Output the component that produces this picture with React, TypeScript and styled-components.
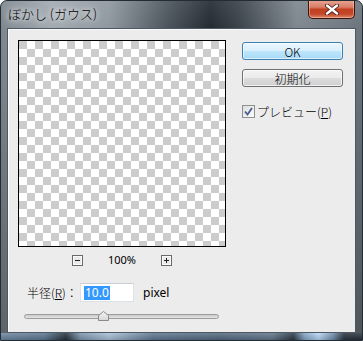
import React from "react";
import styled, { createGlobalStyle } from "styled-components";

const Global = createGlobalStyle`
  html, body { margin: 0; padding: 0; background: #fff; }
  body {
    width: 363px; height: 341px; overflow: hidden;
    font-family: "Noto Sans CJK JP", "Noto Sans", sans-serif;
    font-weight: 300;
  }
`;

const Window = styled.div`
  width: 363px;
  height: 341px;
  box-sizing: border-box;
  display: flex;
  flex-direction: column;
  border: 1px solid #232b33;
  border-radius: 7px 7px 0 0;
  overflow: hidden;
  background:
    linear-gradient(to bottom, rgba(255,255,255,0.08) 0, rgba(0,0,0,0) 28px, rgba(0,0,0,0.28) 100%),
    linear-gradient(90deg, #7e878f 0%, #a3abb2 14%, #8f989f 30%, #4c555d 46%, #252b32 58%, #3b434b 66%, #7f888f 82%, #6c757d 100%);
`;

const TitleBar = styled.div`
  flex: none;
  height: 27px;
  display: flex;
  align-items: flex-start;
  justify-content: space-between;
  padding: 0 7px 0 7px;
`;

const Title = styled.span`
  margin-top: 4px;
  font-size: 13px;
  line-height: 18px;
  color: #000;
  text-shadow: 0 0 5px #fff, 0 0 9px rgba(255,255,255,0.9), 0 0 14px rgba(255,255,255,0.6);
`;

const CloseButton = styled.div`
  width: 47px;
  height: 19px;
  margin-top: -1px;
  box-sizing: border-box;
  border: 1px solid #3a1510;
  border-top: none;
  border-radius: 0 0 5px 5px;
  background: linear-gradient(to bottom, #e6a796 0%, #d97d66 40%, #c0401f 52%, #c4462a 78%, #de8a66 100%);
  box-shadow: inset 0 0 0 1px rgba(255, 200, 185, 0.5);
  display: flex;
  align-items: center;
  justify-content: center;
`;

const Client = styled.div`
  flex: none;
  height: 305px;
  margin: 0 6px;
  box-sizing: border-box;
  background: #ececec;
  border: 1px solid #4d5862;
  box-shadow: inset 1px 1px 0 #fafafa;
  display: flex;
  align-items: flex-start;
  padding: 11px 0 0 10px;
`;

const LeftColumn = styled.div`
  width: 208px;
  display: flex;
  flex-direction: column;
`;

const PreviewBox = styled.div`
  width: 208px;
  height: 207px;
  box-sizing: border-box;
  border: 1px solid #000;
  background-color: #fff;
  background-image: conic-gradient(#fff 25%, #cccccc 0 50%, #fff 0 75%, #cccccc 0);
  background-size: 16px 16px;
`;

const ZoomBar = styled.div`
  margin-top: 7px;
  height: 12px;
  display: flex;
  align-items: center;
  justify-content: center;
  gap: 25px;
`;

const ZoomText = styled.span`
  font-family: "Noto Sans", sans-serif;
  font-weight: 400;
  font-size: 11px;
  line-height: 12px;
  color: #000;
`;

const RadiusRow = styled.div`
  margin-top: 17px;
  padding-left: 9px;
  height: 19px;
  display: flex;
  align-items: center;
`;

const Label = styled.span`
  width: 53px;
  font-size: 12px;
  color: #000;
  white-space: nowrap;
`;

const Key = styled.span`
  text-decoration: underline;
`;

const NumberInput = styled.div`
  width: 54px;
  height: 19px;
  box-sizing: border-box;
  background: #fff;
  border: 1px solid #dbe1e7;
  border-top-color: #c9ced4;
  display: flex;
  align-items: center;
  padding-left: 3px;
`;

const Selected = styled.span`
  background: #3399ff;
  color: #fff;
  font-family: "Noto Sans", sans-serif;
  font-weight: 400;
  font-size: 12px;
  line-height: 14px;
  padding: 0 1px;
`;

const Unit = styled.span`
  margin-left: 9px;
  font-family: "Noto Sans", sans-serif;
  font-weight: 400;
  font-size: 12px;
  color: #000;
`;

const Slider = styled.div`
  position: relative;
  margin: 9px 0 0 6px;
  width: 195px;
  height: 10px;
`;

const Track = styled.div`
  position: absolute;
  left: 0;
  right: 0;
  top: 3px;
  height: 5px;
  box-sizing: border-box;
  border: 1px solid #9d9d9d;
  border-radius: 3px;
  background: linear-gradient(to bottom, #c9c9c9, #e4e4e4);
`;

const Thumb = styled.svg`
  position: absolute;
  top: 0;
  left: 74px;
`;

const RightColumn = styled.div`
  margin: 2px 0 0 16px;
  width: 101px;
  display: flex;
  flex-direction: column;
`;

const Button = styled.div<{ $default?: boolean; $gap?: number }>`
  height: 18px;
  margin-top: ${(p) => p.$gap ?? 0}px;
  box-sizing: border-box;
  border-radius: 3px;
  display: flex;
  align-items: center;
  justify-content: center;
  font-size: 12px;
  color: #000;
  border: 1px solid ${(p) => (p.$default ? "#3c7fb1" : "#707070")};
  background: ${(p) =>
    p.$default
      ? "linear-gradient(to bottom, #eaf6fd 0%, #d9f0fc 50%, #bee6fd 51%, #a7d9f5 100%)"
      : "linear-gradient(to bottom, #f2f2f2 0%, #ebebeb 50%, #dddddd 51%, #cfcfcf 100%)"};
  box-shadow: inset 0 0 0 1px ${(p) => (p.$default ? "rgba(255,255,255,0.6)" : "rgba(255,255,255,0.7)")};
`;

const CheckRow = styled.label`
  margin-top: 16px;
  display: flex;
  align-items: center;
  gap: 2px;
  font-size: 12px;
  color: #000;
`;

const CheckBox = styled.div`
  width: 13px;
  height: 13px;
  box-sizing: border-box;
  border: 1px solid #8e8f8f;
  background: linear-gradient(135deg, #dcdcdc, #fdfdfd);
  display: flex;
  align-items: center;
  justify-content: center;
`;

const BottomEdge = styled.div`
  flex: none;
  height: 7px;
  background:
    linear-gradient(to bottom, rgba(255,255,255,0.15), rgba(0,0,0,0.15)),
    linear-gradient(90deg, #6c86a0 0%, #5d7690 12%, #24303b 18%, #7a93ab 22%, #a8c0d6 30%, #5f7790 42%, #52687e 60%, #60768b 75%, #2c3945 81%, #7fa1c2 84%, #b8d6f3 88%, #6f8cab 92%, #28323c 95%, #26303a 100%);
`;

const SmallBox = styled.svg`
  display: block;
`;

function ZoomButton({ plus }: { plus?: boolean }) {
  return (
    <SmallBox width="11" height="11" viewBox="0 0 11 11">
      <rect x="0.5" y="0.5" width="10" height="10" fill="#e9e9e9" stroke="#6a6a6a" />
      <rect x="1.5" y="1.5" width="8" height="8" fill="none" stroke="#fafafa" />
      <line x1="3" y1="5.5" x2="8" y2="5.5" stroke="#222" />
      {plus && <line x1="5.5" y1="3" x2="5.5" y2="8" stroke="#222" />}
    </SmallBox>
  );
}

export default function App() {
  return (
    <>
      <Global />
      <Window>
        <TitleBar>
          <Title>ぼかし (ガウス)</Title>
          <CloseButton>
            <svg width="14" height="11" viewBox="0 0 14 11">
              <path
                d="M2 1.5 L12 9.5 M12 1.5 L2 9.5"
                stroke="#3b1d18"
                strokeWidth="4"
                strokeLinecap="round"
              />
              <path
                d="M2 1.5 L12 9.5 M12 1.5 L2 9.5"
                stroke="#fff"
                strokeWidth="2.4"
                strokeLinecap="round"
              />
            </svg>
          </CloseButton>
        </TitleBar>
        <Client>
          <LeftColumn>
            <PreviewBox />
            <ZoomBar>
              <ZoomButton />
              <ZoomText>100%</ZoomText>
              <ZoomButton plus />
            </ZoomBar>
            <RadiusRow>
              <Label>
                半径(<Key>R</Key>)：
              </Label>
              <NumberInput>
                <Selected>10.0</Selected>
              </NumberInput>
              <Unit>pixel</Unit>
            </RadiusRow>
            <Slider>
              <Track />
              <Thumb width="11" height="10" viewBox="0 0 11 10">
                <defs>
                  <linearGradient id="thumbg" x1="0" y1="0" x2="0" y2="1">
                    <stop offset="0" stopColor="#f4f4f4" />
                    <stop offset="1" stopColor="#d6d6d6" />
                  </linearGradient>
                </defs>
                <path
                  d="M5.5 0.5 L10.5 4.5 L10.5 9.5 L0.5 9.5 L0.5 4.5 Z"
                  fill="url(#thumbg)"
                  stroke="#8a8a8a"
                  strokeLinejoin="round"
                />
              </Thumb>
            </Slider>
          </LeftColumn>
          <RightColumn>
            <Button $default>OK</Button>
            <Button $gap={9}>初期化</Button>
            <CheckRow>
              <CheckBox>
                <svg width="9" height="9" viewBox="0 0 9 9">
                  <path
                    d="M1 4.5 L3.5 7.5 L8 1"
                    fill="none"
                    stroke="#4a5e95"
                    strokeWidth="1.8"
                  />
                </svg>
              </CheckBox>
              <span>
                プレビュー(<Key>P</Key>)
              </span>
            </CheckRow>
          </RightColumn>
        </Client>
        <BottomEdge />
      </Window>
    </>
  );
}
